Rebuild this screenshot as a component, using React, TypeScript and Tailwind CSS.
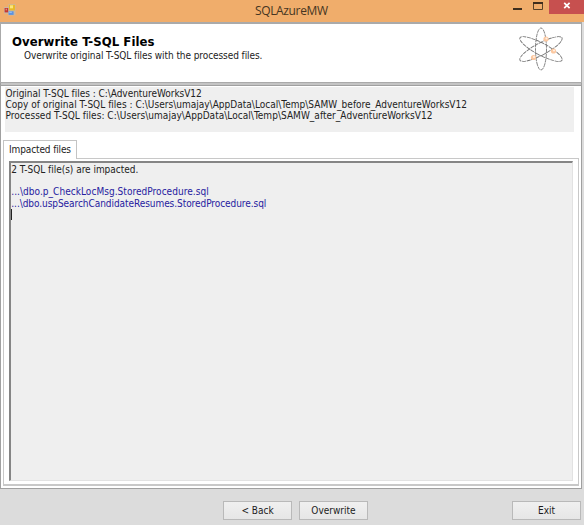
import type { ReactNode } from "react";

const UI_FONT = "font-['DejaVu_Sans_Condensed','DejaVu_Sans',sans-serif] [font-stretch:condensed]";

function Atom() {
  const angles = [0, 62, 118];
  return (
    <svg width="48" height="48" viewBox="-24 -24 48 48" fill="none" className="block">
      {angles.map((a) => (
        <ellipse
          key={a}
          rx={a === 0 ? 5.5 : 6}
          ry={a === 0 ? 21 : 23.8}
          transform={`rotate(${a})`}
          stroke="#777"
          strokeWidth="0.9"
          strokeDasharray="4 0.7"
        />
      ))}
      {[[5, -10], [12.5, 2], [-7.5, 8.5]].map(([x, y]) => (
        <g key={x}>
          <circle cx={x} cy={y} r="2.6" fill="#fcc8a0" />
          <circle cx={x + 0.5} cy={y - 0.5} r="1.1" fill="#fff0e4" />
        </g>
      ))}
    </svg>
  );
}

function AppIcon() {
  return (
    <svg width="12" height="12" viewBox="0 0 12 12" className="block">
      <path d="M0 3h4.5V0h7v11.5H4V9.5H0z" fill="#c9b7a4" />
      <rect x="0.6" y="4" width="3.6" height="4.4" fill="#c43730" />
      <rect x="1.6" y="4.7" width="1.4" height="1.6" fill="#e68a7c" />
      <rect x="5" y="0.8" width="6" height="5.6" fill="#e8b92a" />
      <rect x="6" y="1.3" width="3" height="3" fill="#fbe67c" />
      <rect x="4.6" y="7.3" width="5" height="3.6" fill="#5b93e2" />
      <rect x="5.2" y="7.6" width="2.6" height="1.4" fill="#94bcf2" />
    </svg>
  );
}

function Button({ children, className = "" }: { children: ReactNode; className?: string }) {
  return (
    <button
      className={`flex h-[19px] w-[69px] items-center justify-center border border-[#b9b9b9] bg-linear-to-b from-[#f0f0f0] to-[#e6e6e6] pt-px text-[10px] leading-none text-[#1c1c1c] ${className}`}
    >
      {children}
    </button>
  );
}

export default function App() {
  return (
    <div className={`flex h-[525px] w-[584px] flex-col overflow-hidden bg-[#dcdcdc] text-[10px] text-[#222] ${UI_FONT}`}>
      <header className="flex h-[22px] shrink-0 items-start bg-[#f0ad6b]">
        <div className="w-[251px] pt-1 pl-1">
          <AppIcon />
        </div>
        <h1 className="w-[106px] pt-px pl-1 font-['Open_Sans',sans-serif] text-[12px] leading-[20px] tracking-[-0.36px] whitespace-nowrap text-[#453522] [font-stretch:normal]">
          SQLAzureMW
        </h1>
        <div className="ml-auto flex items-start">
          <svg width="36" height="14" viewBox="0 0 36 14" className="block">
            <rect x="0" y="8" width="9" height="2" fill="#3f2e1d" />
            <path d="M20.5 3v6.5h9V3" fill="none" stroke="#5a4228" />
            <rect x="20" y="2" width="10" height="2" fill="#3f2e1d" />
          </svg>
          <div className="flex h-[14px] w-[35px] justify-center bg-[#c7504f]">
            <svg width="8" height="11" viewBox="0 0 8 11" className="block">
              <path d="M1.2 2.8l5.4 5.4M6.6 2.8L1.2 8.2" stroke="#fff" strokeWidth="1.7" />
            </svg>
          </div>
        </div>
      </header>

      <section className="mr-[2px] flex h-[61px] shrink-0 justify-between border border-t-2 border-[#aaa] bg-white">
        <div className="pt-[10px] pl-[11px] whitespace-nowrap">
          <h2 className="text-[13px] leading-[15px] font-bold tracking-[0.07px] text-black">Overwrite T-SQL Files</h2>
          <p className="pl-3 leading-[14px] tracking-[-0.08px]">Overwrite original T-SQL files with the processed files.</p>
        </div>
        <div className="pt-px pr-[16px]">
          <Atom />
        </div>
      </section>

      <main className="mr-[2px] flex h-[406px] shrink-0 flex-col border border-t-0 border-[#a0a0a0] bg-white">
        <div className="h-[3px] shrink-0 border-b border-[#a0a0a0] bg-[#c4c4c4]" />
        <div className="mt-px mr-[7px] ml-1 h-[45px] shrink-0 bg-[#efefef] pt-px pl-[0.5px] leading-[11.2px] whitespace-nowrap">
          <p className="tracking-[-0.03px]">Original T-SQL files : C:\AdventureWorksV12</p>
          <p className="tracking-[0.02px]">Copy of original T-SQL files : C:\Users\umajay\AppData\Local\Temp\SAMW_before_AdventureWorksV12</p>
          <p className="tracking-[0.04px]">Processed T-SQL files: C:\Users\umajay\AppData\Local\Temp\SAMW_after_AdventureWorksV12</p>
        </div>
        <div className="z-10 mt-2 -mb-px ml-[2px] flex h-[19px] w-[74px] shrink-0 items-center border border-b-0 border-[#c4c4c4] bg-white pb-px pl-[5px] tracking-[-0.12px] whitespace-nowrap">
          Impacted files
        </div>
        <div className="mr-[2px] mb-[2px] ml-[2px] flex min-h-0 flex-1 border border-b-2 border-[#c8c8c8] p-[2px] pr-[5px] pb-[3px] pl-[5px]">
          <div className="flex-1 border border-t-2 border-l-2 border-[#e2e2e2] border-t-[#858585] border-l-[#858585] bg-[#efefef] pt-px pl-[0.3px] leading-[11.3px] whitespace-nowrap">
            <p className="tracking-[-0.03px]">2 T-SQL file(s) are impacted.</p>
            <p className="mt-[11px] tracking-[0.04px] text-[#2620a0]">...\dbo.p_CheckLocMsg.StoredProcedure.sql</p>
            <p className="tracking-[-0.06px] text-[#2620a0]">...\dbo.uspSearchCandidateResumes.StoredProcedure.sql</p>
            <div className="h-[11px] w-px bg-[#222]" />
          </div>
        </div>
      </main>

      <footer className="flex flex-1 items-start pt-[12px] pr-[3px] pl-[223px]">
        <Button>&lt; Back</Button>
        <Button className="ml-[7px]">Overwrite</Button>
        <Button className="ml-auto">Exit</Button>
      </footer>
    </div>
  );
}
